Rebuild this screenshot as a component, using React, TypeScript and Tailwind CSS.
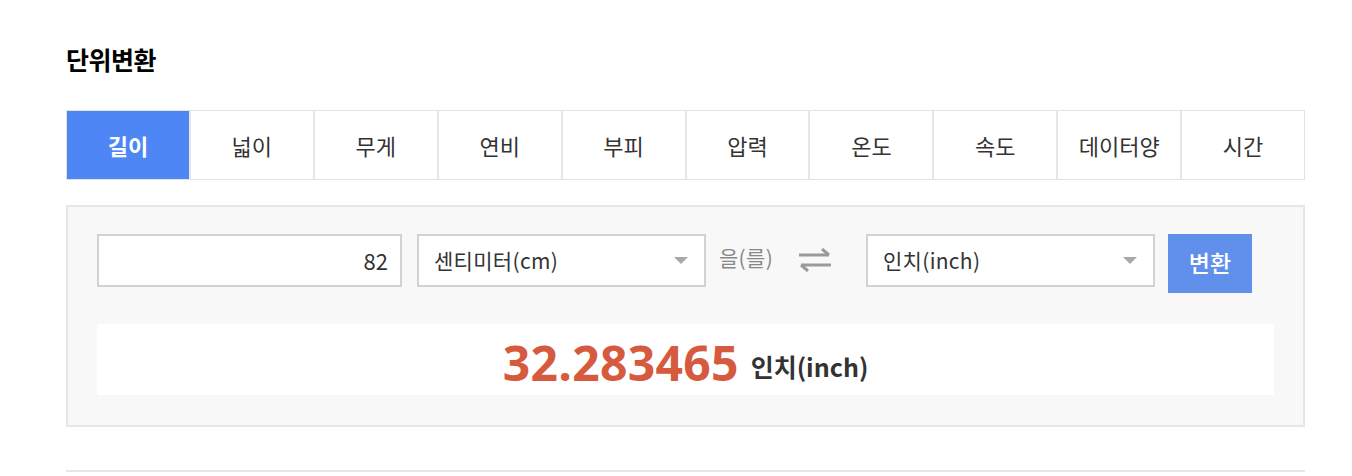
const tabs = ['길이', '넓이', '무게', '연비', '부피', '압력', '온도', '속도', '데이터양', '시간'];

const font = { fontFamily: '"Noto Sans CJK KR", "Noto Sans", sans-serif' };

function Select({ label }: { label: string }) {
  return (
    <div className="w-[289px] h-[53px] bg-white border-2 border-[#d2d2d2] flex items-center justify-between pl-[15px] pr-[16px]">
      <span className="text-[21px] text-[#333] tracking-[0.3px]">{label}</span>
      <svg width="14" height="7" viewBox="0 0 14 7">
        <path d="M0 0 L14 0 L7 7 Z" fill="#a8a8a8" />
      </svg>
    </div>
  );
}

function SwapIcon() {
  return (
    <svg width="36" height="24" viewBox="0 0 36 24">
      <g fill="none" stroke="#9a9a9a" strokeWidth="3">
        <path d="M2 7 H32" />
        <path d="M25 1 L32 7" />
        <path d="M4 17 H34" />
        <path d="M11 23 L4 17" />
      </g>
    </svg>
  );
}

export default function App() {
  return (
    <div className="bg-white w-[1352px] h-[476px] pl-[66px] pt-[42px]" style={font}>
      <h1 className="text-[25px] font-bold text-black tracking-[-0.5px] leading-[34px]">단위변환</h1>

      <div className="mt-[34px] w-[1239px] flex border border-[#e2e2e2]">
        {tabs.map((t, i) => (
          <div
            key={t}
            className={
              i === 0
                ? 'flex-1 h-[68px] flex items-center justify-center bg-[#4f86f6] text-white font-bold text-[22px]'
                : 'flex-1 h-[68px] flex items-center justify-center border-l-2 border-[#e6e6e6] text-[#333] text-[22px]'
            }
          >
            {t}
          </div>
        ))}
      </div>

      <div className="mt-[25px] w-[1239px] bg-[#f8f8f8] border-2 border-[#e6e6e6] px-[29px] pt-[27px] pb-[30px]">
        <div className="flex items-start">
          <div className="w-[305px] h-[53px] bg-white border-2 border-[#d2d2d2] flex items-center justify-end pr-[12px] text-[22px] text-[#333]">
            82
          </div>
          <div className="ml-[15px]">
            <Select label="센티미터(cm)" />
          </div>
          <div className="w-[160px] h-[53px] flex items-center pl-[13px]">
            <span className="text-[21px] text-[#888] pb-[6px] tracking-[0.3px]">을(를)</span>
            <div className="ml-[24px] pb-[2px]">
              <SwapIcon />
            </div>
          </div>
          <Select label="인치(inch)" />
          <button className="ml-[13px] w-[84px] h-[59px] bg-[#6090ec] text-white text-[23px] font-medium pb-[2px]">
            변환
          </button>
        </div>

        <div className="mt-[31px] bg-white h-[71px] flex items-center justify-center gap-[12px] pt-[6px]">
          <span className="text-[48px] font-bold text-[#d55a3e] leading-none tracking-[0.3px]" style={{ fontFamily: '"Open Sans", "Noto Sans", sans-serif' }}>
            32.283465
          </span>
          <span className="text-[25px] font-bold text-[#333] mt-[8px]">인치(inch)</span>
        </div>
      </div>

      <div className="mt-[43px] w-[1239px] h-[2px] bg-[#e6e6e6]" />
    </div>
  );
}
